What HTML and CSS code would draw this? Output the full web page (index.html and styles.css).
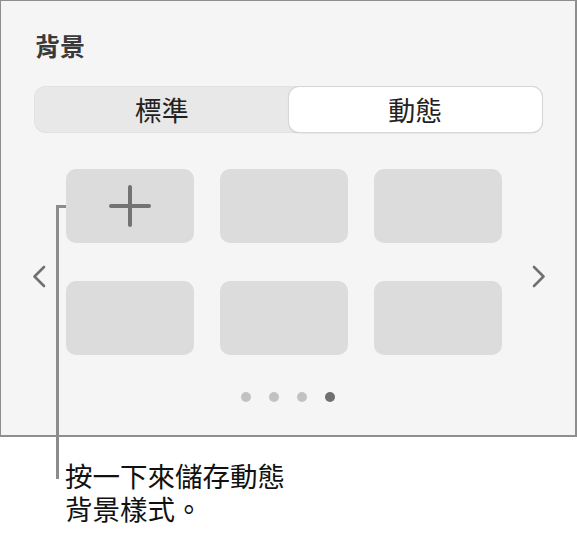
FILE: index.html
```html
<!DOCTYPE html>
<html lang="zh-Hant">
<head>
    <meta charset="UTF-8">
    <meta name="viewport" content="width=device-width, initial-scale=1.0">
    <title>背景</title>
    <link rel="stylesheet" href="styles.css">
</head>
<body>
    <div class="figure">
        <section class="panel">
            <h2 class="panel-title">背景</h2>

            <div class="segmented">
                <button class="segment">標準</button>
                <button class="segment active">動態</button>
            </div>

            <div class="carousel">
                <button class="chevron" aria-label="上一頁">
                    <svg width="14" height="23" viewBox="0 0 14 23">
                        <path d="M12 2 L2.5 11.5 L12 21" fill="none" stroke="#707070" stroke-width="2.6" stroke-linecap="round" stroke-linejoin="round"/>
                    </svg>
                </button>

                <div class="tiles">
                    <div class="tile add">
                        <svg width="42" height="42" viewBox="0 0 42 42">
                            <path d="M21 2 V40 M2 21 H40" stroke="#737373" stroke-width="4" stroke-linecap="round"/>
                        </svg>
                    </div>
                    <div class="tile"></div>
                    <div class="tile"></div>
                    <div class="tile"></div>
                    <div class="tile"></div>
                    <div class="tile"></div>
                </div>

                <button class="chevron next" aria-label="下一頁">
                    <svg width="14" height="23" viewBox="0 0 14 23">
                        <path d="M2 2 L11.5 11.5 L2 21" fill="none" stroke="#707070" stroke-width="2.6" stroke-linecap="round" stroke-linejoin="round"/>
                    </svg>
                </button>
            </div>

            <div class="dots">
                <span class="dot"></span>
                <span class="dot"></span>
                <span class="dot"></span>
                <span class="dot current"></span>
            </div>
        </section>

        <!-- línea de la leyenda, va por encima del panel -->
        <div class="callout-line"></div>

        <div class="callout">
            <span class="callout-row">按一下來儲存動態</span>
            <span class="callout-row">背景樣式。</span>
        </div>
    </div>
</body>
</html>
```

FILE: styles.css
```css
/* Estilos generales */
body {
    margin: 0;
    background-color: #ffffff;
    font-family: 'Noto Sans CJK TC', 'Noto Sans', sans-serif;
}

.figure {
    position: relative;
    width: 577px;
}

/* Panel de fondo */
.panel {
    box-sizing: border-box;
    width: 577px;
    height: 437px;
    background-color: #f5f5f5;
    border: 1px solid #8e8e8e;
    border-right-width: 2px;
    border-bottom-width: 2px;
    padding-top: 29px;
}

.panel-title {
    margin: 0 0 0 34px;
    font-size: 25px;
    line-height: 30px;
    font-weight: 700;
    color: #3a3a3a;
}

/* Control segmentado */
.segmented {
    box-sizing: border-box;
    display: flex;
    width: 509px;
    height: 47px;
    margin: 26px 0 0 33px;
    padding: 1px;
    background-color: #e8e8e8;
    border-radius: 12px;
    box-shadow: inset 0 0 0 1px #e2e2e2;
}

.segment {
    flex: 1;
    border: none;
    background: transparent;
    font-family: inherit;
    font-size: 27px;
    color: #222222;
    padding: 0;
    border-radius: 10px;
}

.segment.active {
    background-color: #ffffff;
    box-shadow: 0 0 0 1px #d6d6d6, 0 1px 2px rgba(0, 0, 0, 0.15);
}

/* Carrusel de miniaturas */
.carousel {
    display: flex;
    align-items: flex-start;
    margin-top: 36px;
    padding-left: 31px;
}

.chevron {
    display: block;
    width: 14px;
    height: 23px;
    margin-top: 96px;
    padding: 0;
    border: none;
    background: transparent;
}

.chevron svg {
    display: block;
}

.chevron.next {
    margin-left: 30px;
}

.tiles {
    display: grid;
    grid-template-columns: repeat(3, 128px);
    grid-auto-rows: 74px;
    column-gap: 26px;
    row-gap: 38px;
    margin-left: 20px;
}

.tile {
    background-color: #dcdcdc;
    border-radius: 10px;
}

.tile.add {
    display: flex;
    align-items: center;
    justify-content: center;
}

/* Indicador de página */
.dots {
    display: flex;
    justify-content: center;
    gap: 18px;
    margin-top: 37px;
}

.dot {
    width: 10px;
    height: 10px;
    border-radius: 50%;
    background-color: #c2c2c2;
}

.dot.current {
    background-color: #707070;
}

/* Leyenda */
.callout-line {
    position: absolute;
    left: 56px;
    top: 205px;
    width: 10px;
    height: 274px;
    border-left: 3px solid #8c8c8c;
    border-top: 3px solid #8c8c8c;
    box-sizing: border-box;
}

.callout {
    margin: 22px 0 0 65px;
    font-size: 27.5px;
    color: #111111;
}

.callout-row {
    display: block;
    height: 33px;
    line-height: 33px;
}
```
